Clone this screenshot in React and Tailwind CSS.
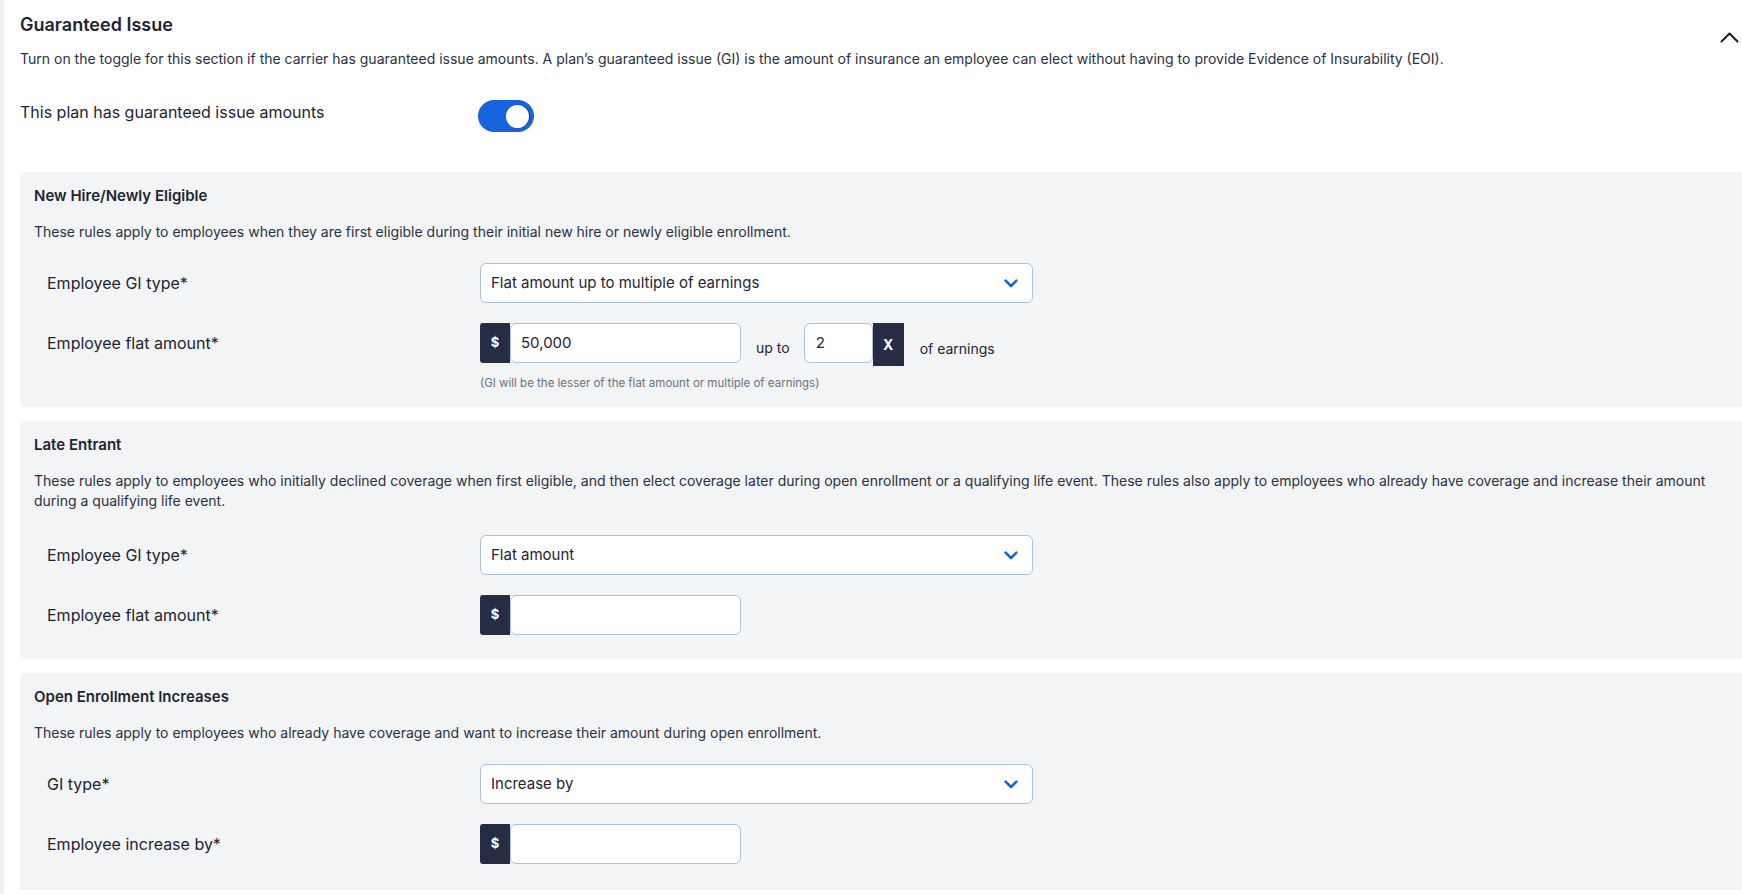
import React from "react";

function ChevronDown() {
  return (
    <svg width="14" height="9" viewBox="0 0 14 9" fill="none">
      <path d="M1.6 1.6L7 7L12.4 1.6" stroke="#1a62d8" strokeWidth="2.6" strokeLinecap="round" strokeLinejoin="round" />
    </svg>
  );
}

function ChevronUp() {
  return (
    <svg width="19" height="12" viewBox="0 0 19 12" fill="none">
      <path d="M1.5 10.5L9.5 2.5L17.5 10.5" stroke="#1c1c1c" strokeWidth="2" strokeLinecap="round" strokeLinejoin="round" />
    </svg>
  );
}

function Select({ value }) {
  return (
    <div className="flex h-10 w-[553px] items-center justify-between rounded-[6px] border border-[#aac2d9] bg-white pl-[10px] pr-[14px] text-[15px] text-[#1f2433]">
      <span>{value}</span>
      <ChevronDown />
    </div>
  );
}

function DollarInput({ value }) {
  return (
    <div className="flex h-10">
      <div className="flex w-[30px] items-center justify-center rounded-l-[3px] bg-[#262c44] text-[13px] font-bold text-white">$</div>
      <div className="flex w-[231px] items-center rounded-[6px] border border-[#aac2d9] bg-white pl-[10px] text-[15px] text-[#1f2433]">
        {value}
      </div>
    </div>
  );
}

function Row({ label, children }) {
  return (
    <div className="flex pl-[13px]">
      <div className="flex h-10 w-[433px] shrink-0 items-center text-[16px] text-[#1f2433]">{label}</div>
      <div>{children}</div>
    </div>
  );
}

function Panel({ title, desc, children, pb, rowsMt }) {
  return (
    <section className={`rounded-l-[4px] bg-[#f3f4f6] px-[14px] pt-[14px] ${pb}`}>
      <h3 className="text-[15px] font-semibold leading-5 text-[#1f2433]">{title}</h3>
      <p className="mt-4 text-[14px] leading-5 text-[#2b3142]">{desc}</p>
      <div className={`flex flex-col gap-5 ${rowsMt}`}>{children}</div>
    </section>
  );
}

export default function App() {
  return (
    <div className="flex min-h-screen bg-white font-['Inter','Noto_Sans',sans-serif]">
      <div className="w-[4px] shrink-0 bg-[#eef0f3]" />
      <main className="flex-1 pl-4 pt-[12px]">
        <div className="flex">
          <div className="flex-1">
            <h2 className="text-[18px] font-semibold leading-[26px] text-[#1f2433]">Guaranteed Issue</h2>
            <p className="mt-[11px] text-[14px] leading-5 text-[#2b3142]">
              Turn on the toggle for this section if the carrier has guaranteed issue amounts. A plan’s guaranteed issue (GI) is the amount of insurance an employee can elect without having to provide Evidence of Insurability (EOI).
            </p>
          </div>
          <div className="mr-[3px] mt-[19px]">
            <ChevronUp />
          </div>
        </div>

        <div className="mt-[31px] flex items-start">
          <div className="w-[458px] text-[16px] leading-6 text-[#1f2433]">This plan has guaranteed issue amounts</div>
          <div className="flex h-8 w-[56px] items-center justify-end rounded-full bg-[#1763dd] pr-[5px]">
            <div className="h-[23px] w-[23px] rounded-full bg-white shadow-[1px_0_1px_rgba(0,0,0,0.35)]" />
          </div>
        </div>

        <div className="mt-[40px] flex flex-col gap-[14px]">
          <Panel
            title="New Hire/Newly Eligible"
            desc="These rules apply to employees when they are first eligible during their initial new hire or newly eligible enrollment."
            pb="pb-[16px]"
            rowsMt="mt-[21px]"
          >
            <Row label="Employee GI type*">
              <Select value="Flat amount up to multiple of earnings" />
            </Row>
            <Row label="Employee flat amount*">
              <div className="flex items-start">
                <DollarInput value="50,000" />
                <span className="ml-[15px] mt-[15px] text-[14px] leading-5 text-[#1f2433]">up to</span>
                <div className="ml-[14px] flex h-10 w-[69px] items-center rounded-[6px] border border-[#aac2d9] bg-white pl-[11px] text-[15px] text-[#1f2433]">2</div>
                <div className="flex h-[43px] w-[31px] items-center justify-center bg-[#262c44] text-[14px] font-bold text-white">X</div>
                <span className="ml-[16px] mt-[16px] text-[14px] leading-5 text-[#1f2433]">of earnings</span>
              </div>
              <div className="mt-[9px] text-[11.5px] leading-4 text-[#6b7280]">
                (GI will be the lesser of the flat amount or multiple of earnings)
              </div>
            </Row>
          </Panel>

          <Panel
            title="Late Entrant"
            desc="These rules apply to employees who initially declined coverage when first eligible, and then elect coverage later during open enrollment or a qualifying life event. These rules also apply to employees who already have coverage and increase their amount during a qualifying life event."
            pb="pb-[24px]"
            rowsMt="mt-[24px]"
          >
            <Row label="Employee GI type*">
              <Select value="Flat amount" />
            </Row>
            <Row label="Employee flat amount*">
              <DollarInput value="" />
            </Row>
          </Panel>

          <Panel
            title="Open Enrollment Increases"
            desc="These rules apply to employees who already have coverage and want to increase their amount during open enrollment."
            pb="pb-[26px]"
            rowsMt="mt-[21px]"
          >
            <Row label="GI type*">
              <Select value="Increase by" />
            </Row>
            <Row label="Employee increase by*">
              <DollarInput value="" />
            </Row>
          </Panel>
        </div>
      </main>
    </div>
  );
}
